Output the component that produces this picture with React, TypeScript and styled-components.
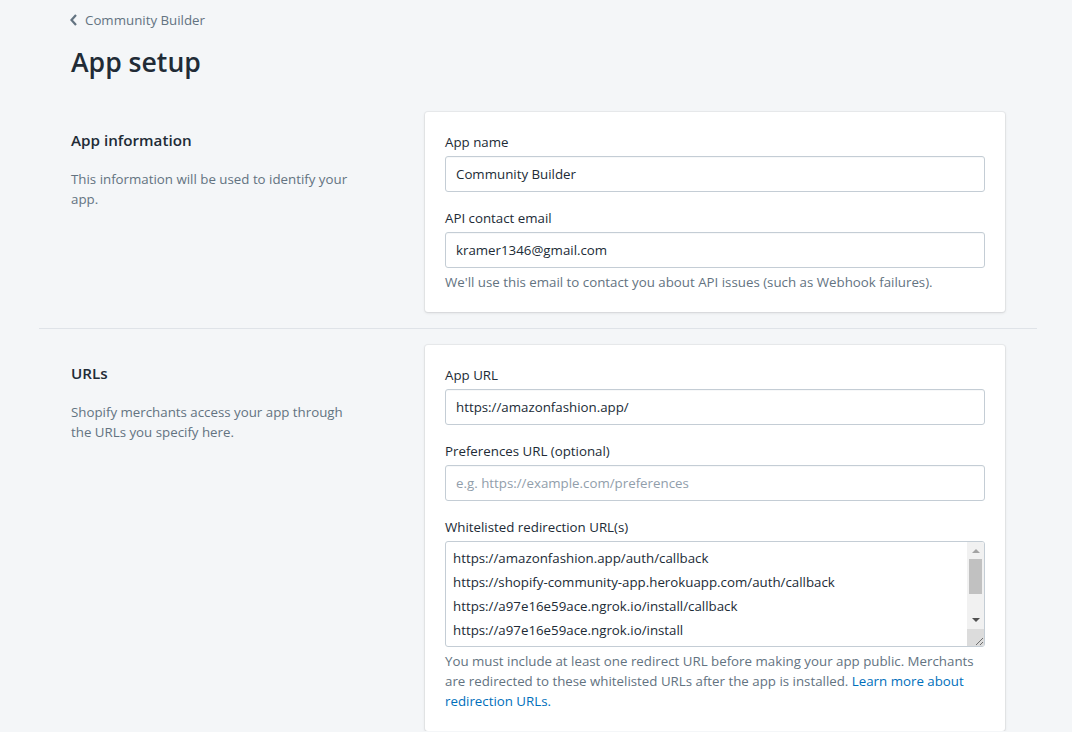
import React from "react";
import styled, { createGlobalStyle } from "styled-components";

const Global = createGlobalStyle`
  html, body { margin: 0; padding: 0; background: #f4f6f8; }
  body {
    font-family: "Open Sans", "Noto Sans", Arial, sans-serif;
    color: #212b36;
    -webkit-font-smoothing: antialiased;
  }
  * { box-sizing: border-box; }
`;

const Page = styled.div`
  width: 998px;
  margin-left: 39px;
  padding: 0 32px;
`;

const Header = styled.header`
  padding-top: 10px;
  height: 112px;
`;

const Breadcrumb = styled.a`
  display: flex;
  align-items: center;
  gap: 6px;
  height: 20px;
  font-size: 13.3px;
  line-height: 20px;
  color: #637381;
  text-decoration: none;
  margin-left: -2px;
`;

const Title = styled.h1`
  margin: 16px 0 0;
  font-size: 26.6px;
  line-height: 32px;
  font-weight: 600;
  color: #212b36;
`;

const Section = styled.section`
  display: grid;
  grid-template-columns: 334px 580px;
  column-gap: 20px;
`;

const Divider = styled.hr`
  border: none;
  border-top: 1px solid #dfe3e8;
  margin: 16px -32px 16px;
`;

const Annotation = styled.div`
  padding-top: 16px;
  padding-right: 46px;
`;

const AnnoTitle = styled.h2`
  margin: 0;
  font-size: 15.2px;
  line-height: 24px;
  font-weight: 600;
  color: #212b36;
`;

const AnnoText = styled.p`
  margin: 17px 0 0;
  font-size: 13.3px;
  line-height: 20px;
  color: #637381;
`;

const Card = styled.div`
  background: #fff;
  border-radius: 3px;
  box-shadow: 0 0 0 1px rgba(63, 63, 68, 0.05), 0 1px 3px 0 rgba(63, 63, 68, 0.15);
  padding: 20px;
  display: flex;
  flex-direction: column;
  gap: 16px;
`;

const Field = styled.div`
  display: flex;
  flex-direction: column;
`;

const Label = styled.label`
  font-size: 13.3px;
  line-height: 20px;
  margin-bottom: 4px;
  color: #212b36;
`;

const Input = styled.div<{ $placeholder?: boolean }>`
  height: 36px;
  border: 1px solid #c4cdd5;
  border-radius: 3px;
  padding: 0 10px 1px;
  display: flex;
  align-items: center;
  font-size: 13.3px;
  color: ${(p) => (p.$placeholder ? "#919eab" : "#212b36")};
  box-shadow: inset 0 1px 0 0 rgba(99, 115, 129, 0.05);
`;

const Help = styled.p`
  margin: 4px 0 0;
  font-size: 13.3px;
  line-height: 20px;
  color: #637381;
`;

const Link = styled.a`
  color: #006fbb;
  text-decoration: none;
`;

const TextArea = styled.div`
  height: 106px;
  border: 1px solid #c4cdd5;
  border-radius: 3px;
  display: grid;
  grid-template-columns: 1fr 17px;
  overflow: hidden;
`;

const Lines = styled.div`
  padding: 4px 7px 0;
  font-size: 13.3px;
  line-height: 24px;
  color: #212b36;
  overflow: hidden;
`;

const Scrollbar = styled.div`
  display: flex;
  flex-direction: column;
  background: #f1f1f1;
`;

const ScrollButton = styled.div`
  height: 17px;
  display: flex;
  align-items: center;
  justify-content: center;
`;

const Track = styled.div`
  flex: 1;
  padding: 0 2px;
`;

const Thumb = styled.div`
  height: 35px;
  background: #c1c1c1;
`;

const Resizer = styled.div`
  height: 17px;
  background: #dcdcdc;
  display: flex;
  align-items: flex-end;
  justify-content: flex-end;
`;

function Chevron() {
  return (
    <svg width="10" height="14" viewBox="0 0 10 14">
      <path d="M7 2 L2.5 7 L7 12" fill="none" stroke="#637381" strokeWidth="2.2" />
    </svg>
  );
}

function Arrow({ up }: { up?: boolean }) {
  return (
    <svg width="8" height="5" viewBox="0 0 8 5">
      <path d={up ? "M0 5 L4 1 L8 5 Z" : "M0 0 L8 0 L4 4 Z"} fill={up ? "#a3a3a3" : "#505050"} />
    </svg>
  );
}

export default function App() {
  return (
    <>
      <Global />
      <Page>
        <Header>
          <Breadcrumb href="#">
            <Chevron />
            Community Builder
          </Breadcrumb>
          <Title>App setup</Title>
        </Header>

        <Section>
          <Annotation>
            <AnnoTitle>App information</AnnoTitle>
            <AnnoText>This information will be used to identify your app.</AnnoText>
          </Annotation>
          <Card>
            <Field>
              <Label>App name</Label>
              <Input>Community Builder</Input>
            </Field>
            <Field>
              <Label>API contact email</Label>
              <Input>kramer1346@gmail.com</Input>
              <Help>We'll use this email to contact you about API issues (such as Webhook failures).</Help>
            </Field>
          </Card>
        </Section>

        <Divider />

        <Section>
          <Annotation>
            <AnnoTitle>URLs</AnnoTitle>
            <AnnoText>Shopify merchants access your app through the URLs you specify here.</AnnoText>
          </Annotation>
          <Card>
            <Field>
              <Label>App URL</Label>
              <Input>https://amazonfashion.app/</Input>
            </Field>
            <Field>
              <Label>Preferences URL (optional)</Label>
              <Input $placeholder>e.g. https://example.com/preferences</Input>
            </Field>
            <Field>
              <Label>Whitelisted redirection URL(s)</Label>
              <TextArea>
                <Lines>
                  <div>https://amazonfashion.app/auth/callback</div>
                  <div>https://shopify-community-app.herokuapp.com/auth/callback</div>
                  <div>https://a97e16e59ace.ngrok.io/install/callback</div>
                  <div>https://a97e16e59ace.ngrok.io/install</div>
                </Lines>
                <Scrollbar>
                  <ScrollButton><Arrow up /></ScrollButton>
                  <Track><Thumb /></Track>
                  <ScrollButton><Arrow /></ScrollButton>
                  <Resizer>
                    <svg width="10" height="10" viewBox="0 0 10 10">
                      <path d="M9 2 L2 9 M9 6 L6 9" stroke="#6f6f6f" strokeWidth="1" />
                    </svg>
                  </Resizer>
                </Scrollbar>
              </TextArea>
              <Help>
                You must include at least one redirect URL before making your app public. Merchants are redirected to these whitelisted URLs after the app is installed.{" "}
                <Link href="#">Learn more about redirection URLs.</Link>
              </Help>
            </Field>
          </Card>
        </Section>
      </Page>
    </>
  );
}
